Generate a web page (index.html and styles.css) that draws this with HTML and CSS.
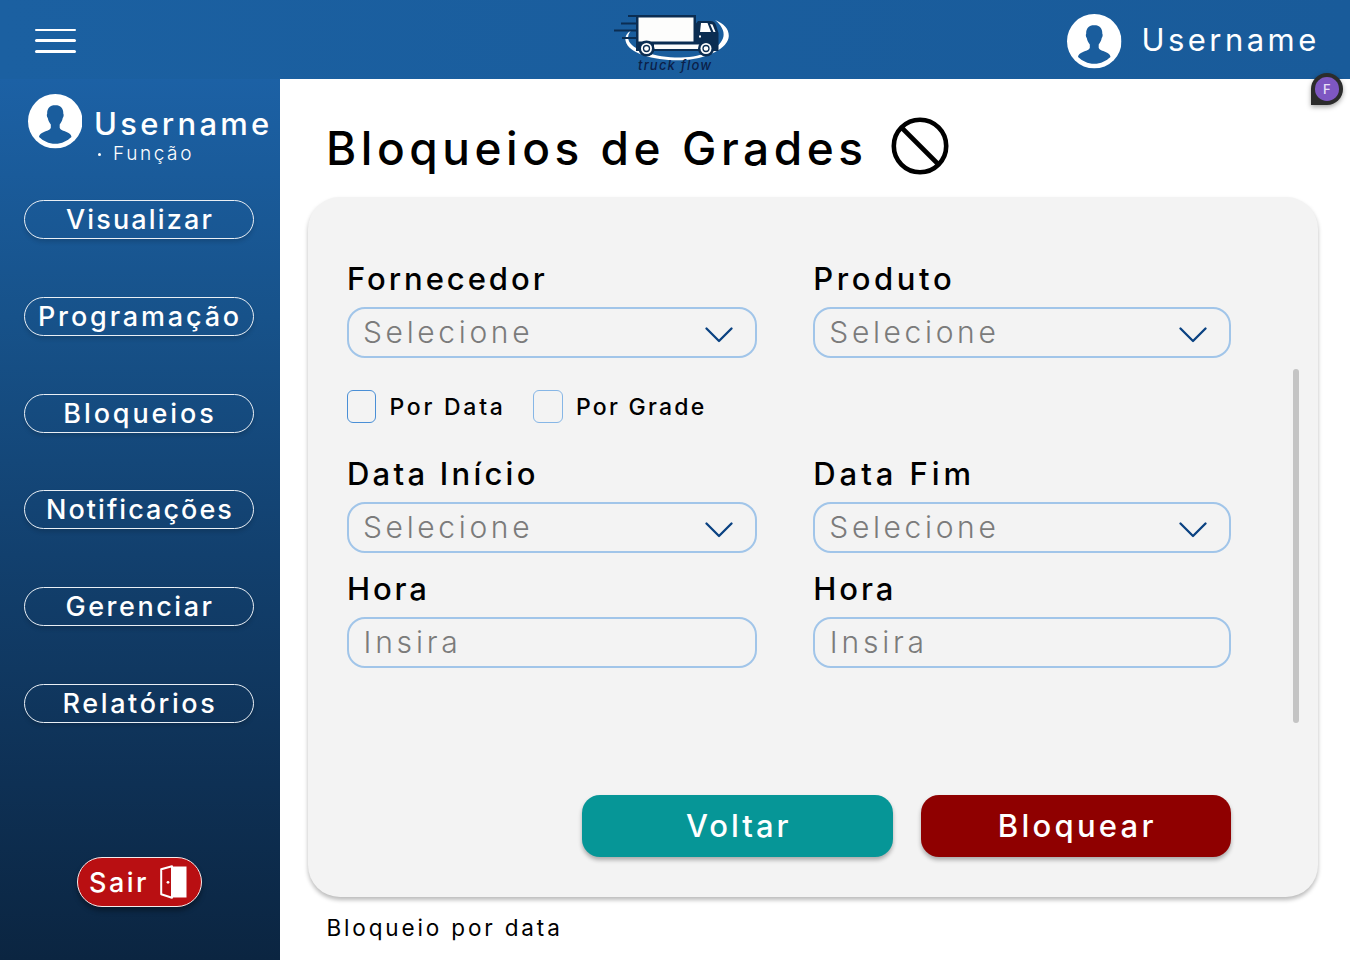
FILE: index.html
```html
<!DOCTYPE html>
<html lang="pt-BR">
<head>
<meta charset="utf-8">
<title>Bloqueios de Grades</title>
<link rel="stylesheet" href="styles.css">
</head>
<body>
<svg class="defs" width="0" height="0">
  <symbol id="avatar" viewBox="0 0 54 54">
    <circle cx="27" cy="27" r="27" fill="#fff"/>
    <path fill="#1a5d9d" d="M27 11c-5.500 0-8.200 3.600-8 8.500-.6.8-.4 3.200.6 4.300.5 2.700 1.500 4.700 3 6.400v3.300c-.6 2.300-3.800 2.900-6.800 4.200-3 1.200-4.500 2.400-4.900 4.800C15 46.200 20.500 49.300 27 49.300s12-3.100 16.100-6.800c-.4-2.400-1.900-3.600-4.900-4.800-3-1.300-6.200-1.900-6.800-4.200v-3.300c1.500-1.700 2.500-3.700 3-6.400 1-1.100 1.200-3.500.6-4.300.2-4.900-2.500-8.500-8-8.500z"/>
  </symbol>
  <symbol id="chevron" viewBox="0 0 28 16">
    <path d="M1.500 1.500 14 14 26.500 1.500" fill="none" stroke="#0a4282" stroke-width="2.300" stroke-linecap="round" stroke-linejoin="round"/>
  </symbol>
</svg>

<header class="topbar">
  <button class="menu" aria-label="Menu"><span></span><span></span><span></span></button>
  <svg class="logo" viewBox="0 0 120 66" aria-label="truck flow">
    <path fill="#fff" d="M101 10c9 3.500 14 9 13.800 16C114.500 38.500 92 49.500 67 50.300 42 51 14.500 44 11.600 31c-.9-4.500 1.500-8.500 6-11-3 3-4 6-3.200 9.500C17 40 42 47.800 67 47.500c23-.3 40-9.500 42.500-21.200 1-5.500-2.500-11.500-8.500-16.300z"/>
    <path fill="none" stroke="#0b2d52" stroke-width="2.200" d="M14 6h10M7 13.500h17M0 20.500h24M8 28h16"/>
    <path fill="#0b2d52" d="M22 5h60v8.500l2-2.500h12.500c3 0 4.500 1.500 5.500 4l2.500 8V41H22z"/>
    <path fill="#fdfdfc" d="M24.500 7.500h55v24h-55zM40 34.500h50V39H40z"/>
    <path fill="#fff" d="M87 13h6.500l3.500 9H86zM96 14l2.500.5 3 7.500H99.500zM85 25.500h2v2h-2z"/>
    <g fill="#0b2d52"><circle cx="32.500" cy="38.500" r="8"/><circle cx="92" cy="38.500" r="8"/></g>
    <g fill="#fff"><circle cx="32.500" cy="38.500" r="5.500"/><circle cx="92" cy="38.500" r="5.500"/></g>
    <g fill="#fff" stroke="#0b2d52" stroke-width="1.300"><circle cx="32.500" cy="38.500" r="3"/><circle cx="92" cy="38.500" r="3"/></g>
    <text class="logo-text" x="24" y="60" textLength="73">truck flow</text>
  </svg>
  <div class="user">
    <svg class="avatar"><use href="#avatar"/></svg>
    <span class="username">Username</span>
  </div>
  <span class="cursor-badge"><b>F</b></span>
</header>

<div class="body">
  <aside class="sidebar">
    <div class="profile">
      <svg class="avatar"><use href="#avatar"/></svg>
      <div class="profile-text">
        <span class="username username-strong">Username</span>
        <span class="role"><i></i>Função</span>
      </div>
    </div>
    <nav class="nav">
      <a class="nav-item t-visualizar">Visualizar</a>
      <a class="nav-item t-programacao">Programação</a>
      <a class="nav-item t-bloqueios">Bloqueios</a>
      <a class="nav-item t-notificacoes">Notificações</a>
      <a class="nav-item t-gerenciar">Gerenciar</a>
      <a class="nav-item t-relatorios">Relatórios</a>
    </nav>
    <button class="exit">Sair
      <svg class="door" viewBox="0 0 27 34"><path fill="#fff" d="M12 1.500h14.500v31H12z"/><path fill="#b90f12" stroke="#fff" stroke-width="2" stroke-linejoin="round" d="M1.200 4.200 12 1.200v31.600L1.200 29.300z"/><circle cx="8" cy="17.300" r="1.400" fill="#fff"/></svg>
    </button>
  </aside>

  <main class="content">
    <div class="heading">
      <h1>Bloqueios de Grades</h1>
      <svg class="block-icon" viewBox="0 0 58 58"><circle cx="29" cy="29" r="26.200"/><path d="M10.500 10.500 47.500 47.500"/></svg>
    </div>

    <section class="card">
      <form class="form">
        <div class="row">
          <div class="field"><label class="label t-fornecedor">Fornecedor</label><div class="input">Selecione<svg class="chevron"><use href="#chevron"/></svg></div></div>
          <div class="field"><label class="label t-produto">Produto</label><div class="input">Selecione<svg class="chevron"><use href="#chevron"/></svg></div></div>
        </div>
        <div class="checks">
          <label class="check"><span class="box"></span><span class="check-text t-pordata">Por Data</span></label>
          <label class="check check-light"><span class="box"></span><span class="check-text t-porgrade">Por Grade</span></label>
        </div>
        <div class="row">
          <div class="field"><label class="label t-inicio">Data Início</label><div class="input">Selecione<svg class="chevron"><use href="#chevron"/></svg></div></div>
          <div class="field"><label class="label t-fim">Data Fim</label><div class="input">Selecione<svg class="chevron"><use href="#chevron"/></svg></div></div>
        </div>
        <div class="row row-hours">
          <div class="field"><label class="label t-hora">Hora</label><div class="input t-insira">Insira</div></div>
          <div class="field"><label class="label t-hora">Hora</label><div class="input t-insira">Insira</div></div>
        </div>
        <div class="actions">
          <button type="button" class="btn btn-back">Voltar</button>
          <button type="button" class="btn btn-block">Bloquear</button>
        </div>
      </form>
      <div class="scrollbar"></div>
    </section>
    <p class="caption">Bloqueio por data</p>
  </main>
</div>
</body>
</html>
```
FILE: styles.css
```css
* { box-sizing: border-box; }
body { margin: 0; width: 1350px; height: 960px; overflow: hidden; background: #fff; color: #000; font-family: Inter, "Liberation Sans", sans-serif; font-weight: 500; }
button { font: inherit; border: 0; padding: 0; background: none; }
.defs { position: absolute; }

.topbar { position: relative; display: flex; align-items: flex-start; justify-content: space-between; height: 79px; padding-left: 34.500px; background: linear-gradient(90deg, #1b60a1, #195b9a); }
.menu { display: flex; flex-direction: column; gap: 8.200px; width: 41px; margin-top: 28.500px; }
.menu span { height: 2.800px; border-radius: 2px; background: #fff; }
.logo { width: 120px; height: 66px; margin: 10px 0 0 206px; }
.logo-text { font: italic 500 13px Inter, sans-serif; fill: #0b2048; }
.user { display: flex; align-items: flex-start; width: 283px; padding-top: 14px; }
.avatar { width: 54.500px; height: 54.500px; flex: none; }
.username { font-size: 31px; line-height: 40px; font-weight: 400; letter-spacing: 3.450px; color: #fff; white-space: nowrap; }
.user .username { margin: 6px 0 0 20px; }
.username-strong { font-weight: 500; letter-spacing: 3.300px; }
.cursor-badge { position: absolute; left: 1310.500px; top: 73px; width: 32.500px; height: 32px; padding: 4px 0 0 4px; border-radius: 16px 16px 16px 0; background: #2c2c2c; box-shadow: 0 2px 5px rgba(0,0,0,.35); z-index: 2; }
.cursor-badge b { display: block; width: 24.500px; height: 24px; border-radius: 50%; background: #7e57c2; color: #e9e0f7; font-size: 13px; font-weight: 500; line-height: 24px; text-align: center; }

.body { display: flex; height: 881px; }
.sidebar { width: 280.400px; flex: none; padding: 15px 0 0 24px; background: linear-gradient(180deg, #1c61a5 0%, #17528a 27%, #12406e 54%, #0e3054 80%, #0b2541 100%); }
.profile { display: flex; height: 106px; padding-left: 3.500px; }
.profile-text { display: flex; flex-direction: column; margin: 10px 0 0 12px; }
.role { display: flex; align-items: center; margin: -2px 0 0 4px; color: #fff; font-size: 19px; line-height: 24px; font-weight: 300; letter-spacing: 2.600px; }
.role i { width: 3px; height: 3px; margin-right: 12px; border-radius: 50%; background: #fff; }
.nav { display: flex; flex-direction: column; gap: 57.800px; width: 230px; }
.nav-item { height: 39px; border: 1px solid #e9eff5; border-radius: 20px; color: #fff; font-size: 27px; line-height: 37.500px; text-align: center; white-space: nowrap; text-indent: 2px; box-shadow: 0 3px 4px rgba(0,0,0,.14); }
.exit { display: flex; align-items: center; width: 124.500px; height: 49.500px; margin: 134.500px 0 0 53px; padding-left: 11px; border: 1.500px solid #f5eaea; border-radius: 25px; background: #b90f12; color: #fff; font-size: 27px; letter-spacing: 2.500px; box-shadow: 0 4px 5px rgba(0,0,0,.35); }
.door { width: 27px; height: 34px; margin-left: 10.500px; }

.t-visualizar { letter-spacing: 2.150px; }
.t-programacao { letter-spacing: 2.850px; }
.t-bloqueios { letter-spacing: 2.900px; }
.t-notificacoes { letter-spacing: 2.050px; }
.t-gerenciar { letter-spacing: 2.550px; }
.t-relatorios { letter-spacing: 2.600px; }
.t-fornecedor { letter-spacing: 2.950px; }
.t-produto { letter-spacing: 3.600px; }
.t-inicio { letter-spacing: 3.250px; }
.t-fim { letter-spacing: 3.950px; }
.t-hora { letter-spacing: 2.900px; }
.t-pordata { letter-spacing: 2.750px; }
.t-porgrade { letter-spacing: 2.250px; }

.content { flex: 1; padding: 38px 32px 0 27.600px; }
.heading { display: flex; align-items: flex-start; height: 80px; padding-left: 18px; }
h1 { margin: 1px 0 0; font-size: 46px; line-height: 60px; font-weight: 500; letter-spacing: 4.550px; white-space: nowrap; width: 565px; }
.block-icon { width: 58px; height: 58px; fill: none; stroke: #000; stroke-width: 4.600; }

.card { position: relative; height: 700px; padding: 62px 87px 0 39px; border-radius: 32px; background: #f3f3f3; box-shadow: 0 3px 4px rgba(0,0,0,.27); }
.row { display: grid; grid-template-columns: 410px 417.500px; column-gap: 56.300px; }
.label { display: block; height: 48px; font-size: 31px; line-height: 40px; white-space: nowrap; }
.input { display: flex; align-items: center; justify-content: space-between; height: 50.500px; padding: 0 21.500px 0 14px; border: 2px solid #a1c5e9; border-radius: 18px; color: #7b7b7b; font-size: 30px; line-height: 36px; font-weight: 300; letter-spacing: 3.650px; }
.t-insira { letter-spacing: 3.800px; padding-left: 14.500px; }
.chevron { width: 28px; height: 16px; margin-top: 6px; }
.checks { display: flex; margin: 32.500px 0 31px; }
.check { display: flex; align-items: center; gap: 13px; width: 186.500px; height: 33px; font-size: 23px; line-height: 33px; white-space: nowrap; }
.check-text { padding-top: 2px; }
.box { width: 29.500px; height: 33px; border: 1.500px solid #4a8fd6; border-radius: 6px; }
.check-light .box { border-color: #86b6e6; }
.row-hours { margin-top: 16.500px; }
.actions { display: flex; justify-content: flex-end; gap: 28px; margin-top: 127px; }
.btn { width: 310.500px; height: 62.500px; border-radius: 18px; color: #fff; font-size: 31px; font-weight: 500; text-indent: 3px; box-shadow: 0 3px 4px rgba(0,0,0,.3); }
.btn-back { background: #069697; letter-spacing: 2.950px; }
.btn-block { background: #8f0000; letter-spacing: 3.250px; }
.scrollbar { position: absolute; right: 19px; top: 172px; width: 6px; height: 354px; border-radius: 3px; background: #c4c4c4; }
.caption { margin: 15px 0 0 18.500px; font-size: 22.500px; line-height: 32px; font-weight: 400; letter-spacing: 2.850px; }
```
